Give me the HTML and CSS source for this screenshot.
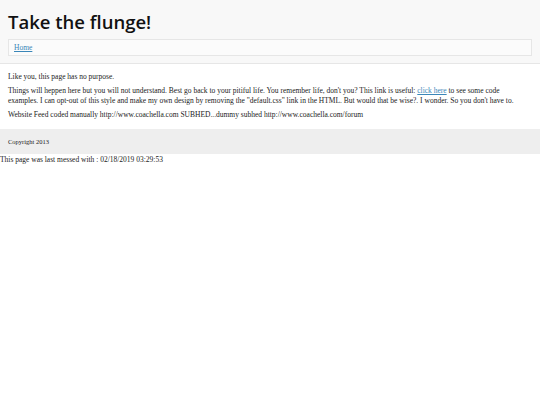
FILE: index.html
```html
<!DOCTYPE html>
<html>
<head>
<meta charset="utf-8">
<link rel="stylesheet" href="styles.css">
</head>
<body>
<div class="header">
  <h1 class="title">Take the flunge!</h1>
  <div class="nav"><a href="#" class="link">Home</a></div>
</div>
<div class="content">
  <p class="para">Like you, this page has no purpose.</p>
  <p class="para">Things will heppen here but you will not understand. Best go back to your pitiful life. You remember life, don't you? This link is useful: <a href="#" class="link">click here</a> to see some code examples. I can opt-out of this style and make my own design by removing the "default.css" link in the HTML. But would that be wise?. I wonder. So you don't have to.</p>
  <p class="para">Website Feed coded manually http://www.coachella.com SUBHED...dummy subhed http://www.coachella.com/forum</p>
</div>
<div class="footer">Copyright 2013</div>
<div class="stamp">This page was last messed with : 02/18/2019 03:29:53</div>
</body>
</html>
```
FILE: styles.css
```css
html, body { margin: 0; padding: 0; background: #fff; }
body { font-family: "Liberation Serif", serif; font-size: 7.5px; color: #222; }
.header { background: #f8f8f8; border-bottom: 1px solid #e6e6e6; padding: 8px 8px 7px; }
.title { font-family: "Open Sans", sans-serif; font-weight: 600; font-size: 18.5px; line-height: 28px; margin: 0 0 3px; color: #111; }
.nav { background: #fbfbfb; border: 1px solid #e6e6e6; padding: 3px 5px; height: 9px; line-height: 9px; font-size: 7.5px; }
.link { color: #3a86b8; }
.content { padding: 8px 14px 5px 8px; }
.para { margin: 0 0 4px; line-height: 10px; }
.footer { background: #eeeeee; padding: 9px 8px 8px; font-size: 6.5px; line-height: 8px; margin-top: 0; }
.stamp { line-height: 10px; padding-top: 1px; }
```
